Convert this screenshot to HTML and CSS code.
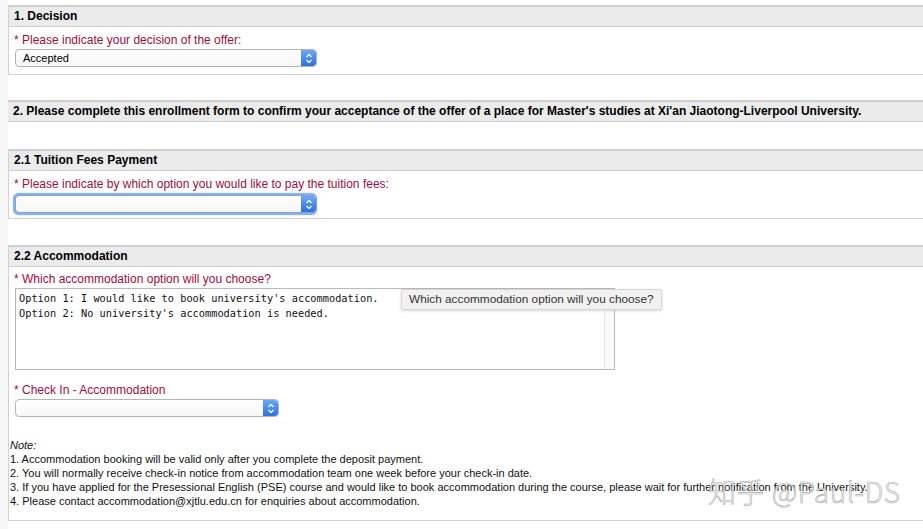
FILE: index.html
```html
<!DOCTYPE html>
<html>
<head>
<meta charset="utf-8">
<link rel="stylesheet" href="styles.css">
</head>
<body>
<div class="page">
  <section class="sec s1">
    <div class="head">1. Decision</div>
    <div class="body">
      <div class="label">* Please indicate your decision of the offer:</div>
      <div class="select w300"><span class="val">Accepted</span><span class="arrow"><svg width="8" height="11" viewBox="0 0 8 11"><path d="M1.5 4 L4 1.5 L6.5 4 M1.5 7 L4 9.5 L6.5 7" fill="none" stroke="#fff" stroke-width="1.3"/></svg></span></div>
    </div>
  </section>

  <section class="sec s2">
    <div class="head">2. Please complete this enrollment form to confirm your acceptance of the offer of a place for Master's studies at Xi'an Jiaotong-Liverpool University.</div>
  </section>

  <section class="sec s21">
    <div class="head">2.1 Tuition Fees Payment</div>
    <div class="body">
      <div class="label">* Please indicate by which option you would like to pay the tuition fees:</div>
      <div class="focus"><div class="select w300 sf"><span class="val"></span><span class="arrow"><svg width="8" height="11" viewBox="0 0 8 11"><path d="M1.5 4 L4 1.5 L6.5 4 M1.5 7 L4 9.5 L6.5 7" fill="none" stroke="#fff" stroke-width="1.3"/></svg></span></div></div>
    </div>
  </section>

  <section class="sec s22">
    <div class="head">2.2 Accommodation</div>
    <div class="body">
      <div class="label">* Which accommodation option will you choose?</div>
      <div class="tawrap">
        <div class="textarea"><div class="tatext">Option 1: I would like to book university's accommodation.
Option 2: No university's accommodation is needed.</div><div class="scroll"></div></div>
        <div class="tooltip">Which accommodation option will you choose?</div>
      </div>
      <div class="label l2">* Check In - Accommodation</div>
      <div class="select w262"><span class="val"></span><span class="arrow"><svg width="8" height="11" viewBox="0 0 8 11"><path d="M1.5 4 L4 1.5 L6.5 4 M1.5 7 L4 9.5 L6.5 7" fill="none" stroke="#fff" stroke-width="1.3"/></svg></span></div>
      <div class="note">
        <div class="ni">Note:</div>
        <div>1. Accommodation booking will be valid only after you complete the deposit payment.</div>
        <div>2. You will normally receive check-in notice from accommodation team one week before your check-in date.</div>
        <div>3. If you have applied for the Presessional English (PSE) course and would like to book accommodation during the course, please wait for further notification from the University.</div>
        <div>4. Please contact accommodation@xjtlu.edu.cn for enquiries about accommodation.</div>
      </div>
      <div class="watermark">知乎 @Paul-DS</div>
    </div>
  </section>
</div>
</body>
</html>
```

FILE: styles.css
```css
html, body {
  margin: 0;
  padding: 0;
}
body {
  background: #f6f6f6;
  font-family: "Liberation Sans", Arial, sans-serif;
  color: #000;
  width: 923px;
  height: 529px;
  overflow: hidden;
}
.page {
  margin-left: 8px;
  background: #fff;
  height: 529px;
  padding-top: 5px;
  box-sizing: border-box;
}
.sec {
  border-left: 1px solid #d2d2d2;
}
.head {
  border-top: 2px solid #cfcfcf;
  border-bottom: 1px solid #cfcfcf;
  background: #ebebeb;
  height: 19px;
  line-height: 19px;
  padding-left: 5px;
  font-size: 12px;
  font-weight: bold;
  white-space: nowrap;
  overflow: hidden;
}
.body {
  border-bottom: 1px solid #d2d2d2;
  padding: 6px 0 7px 0;
  position: relative;
}
.label {
  color: #a20c41;
  font-size: 12px;
  line-height: 14px;
  padding-left: 5px;
  margin-bottom: 2px;
}
.s2 {
  margin-top: 25px;
  border-left: none;
}
.s21 {
  margin-top: 27px;
}
.s22 {
  margin-top: 26px;
}
.select {
  margin-left: 6px;
  height: 16px;
  border: 1px solid #b5b5b5;
  border-radius: 4px;
  background: linear-gradient(#fff, #f7f7f7);
  display: flex;
  align-items: center;
  justify-content: space-between;
  box-sizing: content-box;
  overflow: hidden;
  font-size: 11px;
}
.w300 { width: 300px; }
.w262 { width: 262px; }
.val {
  padding-left: 7px;
}
.arrow {
  width: 15px;
  height: 16px;
  background: linear-gradient(#6aa8fa, #2d6fe4);
  display: flex;
  align-items: center;
  justify-content: center;
  border-radius: 0 3px 3px 0;
}
.focus {
  margin-left: 4px;
  width: 300px;
  padding: 2px;
  border-radius: 6px;
  background: #8bb1ef;
  box-shadow: 0 0 1px #6d98e4;
}
.focus .sf {
  margin-left: 0;
  border-color: #7da3e6;
}
.s21 .body { padding-bottom: 3px; }
.s22 .body { padding-top: 5px; padding-bottom: 6px; }
.tawrap {
  position: relative;
  margin-top: 2px;
}
.textarea {
  margin-left: 6px;
  width: 598px;
  height: 80px;
  border: 1px solid #b9b9b9;
  display: flex;
  background: #fff;
}
.tatext {
  flex: 1;
  font-family: "DejaVu Sans Mono", "Liberation Mono", monospace;
  font-size: 10.3px;
  line-height: 15px;
  padding: 2px 3px;
  white-space: pre;
  color: #111;
}
.scroll {
  width: 9px;
  border-left: 1px solid #e6e6e6;
  background: #fafafa;
}
.tooltip {
  position: absolute;
  left: 392px;
  top: 1px;
  height: 19px;
  line-height: 19px;
  padding: 0 7px;
  background: #f1f1f1;
  border: 1px solid #d6d6d6;
  border-radius: 2px;
  box-shadow: 0 1px 3px rgba(0,0,0,0.15);
  font-family: "Liberation Sans", Arial, sans-serif;
  font-size: 11.8px;
  color: #333;
  white-space: nowrap;
}
.l2 {
  margin-top: 13px;
  margin-bottom: 2px;
}
.note {
  margin-top: 21px;
  padding-left: 1px;
  font-size: 11px;
  line-height: 14px;
  color: #111;
  padding-bottom: 6px;
}
.ni {
  font-style: italic;
}
.watermark {
  position: absolute;
  left: 699px;
  bottom: 9px;
  font-family: "Noto Sans CJK SC", "Noto Sans", sans-serif;
  font-size: 28px;
  font-weight: 300;
  color: rgba(240,240,240,0.75);
  -webkit-text-stroke: 0.6px #b0b0b0;
  white-space: nowrap;
  letter-spacing: 0.5px;
}
```
